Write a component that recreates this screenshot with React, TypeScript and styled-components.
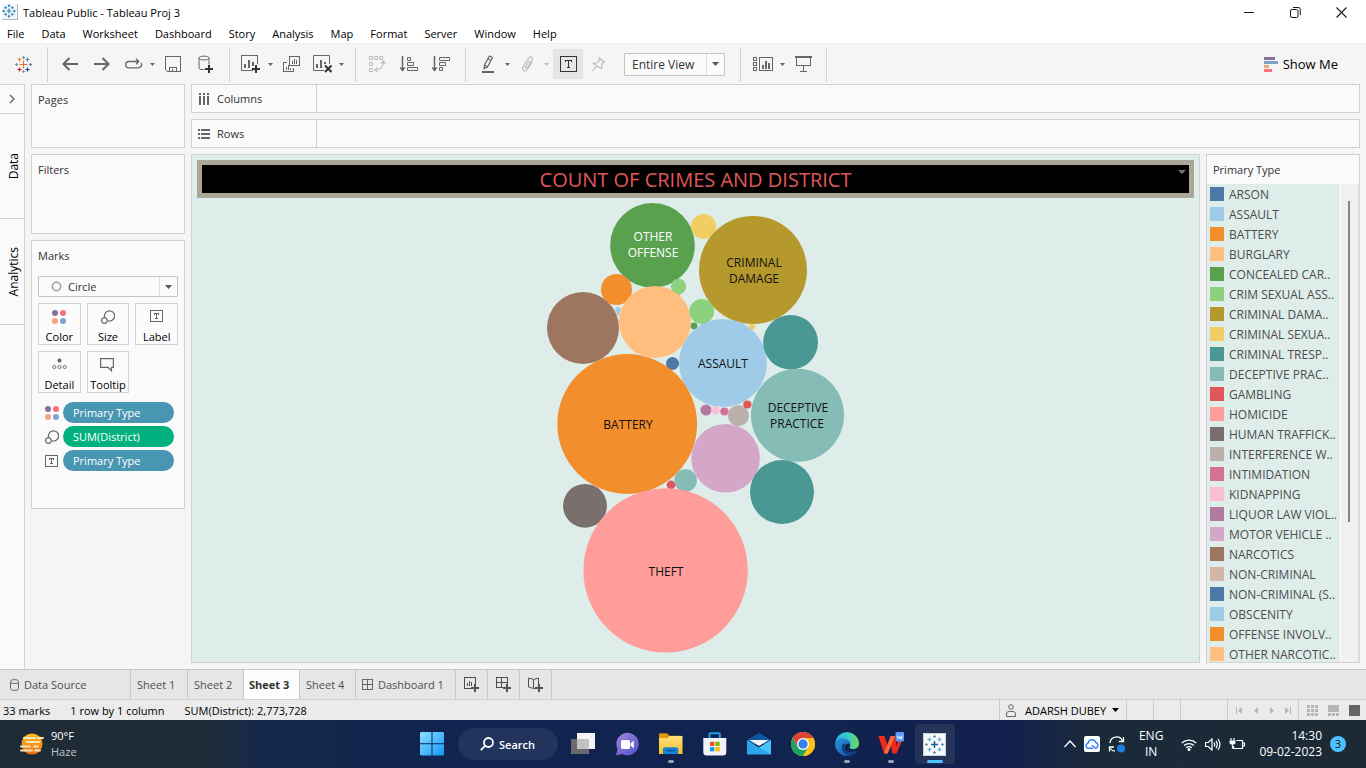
import React from 'react';
import styled, { createGlobalStyle } from 'styled-components';

const GlobalStyle = createGlobalStyle`
  * { box-sizing: border-box; }
  body { margin: 0; background: #f5f5f5; }
  body, button, select {
    font-family: "Open Sans", "Noto Sans", sans-serif;
    font-size: 11px;
    color: #1a1a1a;
  }
  button { border: 0; padding: 0; background: none; cursor: pointer; }
  svg { display: block; flex: none; }
  h1, h2, ul { margin: 0; padding: 0; }
`;

const line = '#d2d2d2';

const Window = styled.div`
  display: flex;
  flex-direction: column;
  height: 100vh;
  overflow: hidden;
`;

/* ---------- title and menu ---------- */

const TitleBar = styled.header`
  display: flex;
  align-items: center;
  height: 24px;
  background: #fff;
  color: #000;
  padding-left: 2px;
`;

const AppIcon = styled.span`
  padding: 0 1px 1px 0;
  border-right: 1px solid #b5b5b5;
  border-bottom: 1px solid #b5b5b5;
  background: #f2f6f9;
`;

const WindowTitle = styled.span`
  margin-left: 5px;
`;

const WindowButtons = styled.div`
  display: flex;
  margin-left: auto;
  margin-right: 2px;
`;

const WindowButton = styled.button`
  display: grid;
  place-items: center;
  width: 46px;
  height: 20px;
`;

const MenuBar = styled.nav`
  display: flex;
  align-items: center;
  gap: 1px;
  height: 19px;
  background: #fff;
`;

const MenuItem = styled.button`
  padding: 0 9px 0 7px;
  line-height: 19px;
  color: #000;
`;

/* ---------- toolbar ---------- */

const ToolbarRow = styled.div`
  display: flex;
  align-items: center;
  height: 41px;
  border-top: 1px solid #ececec;
  background: #f5f5f5;
`;

const ToolGroup = styled.div<{ $left?: number; $right?: number }>`
  display: flex;
  align-items: center;
  height: 35px;
  padding-left: ${(p) => p.$left ?? 6}px;
  padding-right: ${(p) => p.$right ?? 8}px;
  border-right: 1px solid ${line};
`;

const ToolButton = styled.button<{ $narrow?: boolean; $active?: boolean }>`
  display: grid;
  place-items: center;
  width: ${(p) => (p.$narrow ? 30 : 32)}px;
  height: 30px;
  color: #666;
  background: ${(p) => (p.$active ? '#e5e5e5' : 'transparent')};
  margin-left: ${(p) => (p.$active ? 2 : 0)}px;
  &:disabled { color: #bdbdbd; }
`;

const CaretButton = styled.button`
  display: grid;
  place-items: center;
  width: 9px;
  height: 30px;
  color: #666;
  &:disabled { color: #bdbdbd; }
`;

const SelectFrame = styled.div<{ $wide?: boolean }>`
  display: grid;
  grid-template-columns: 1fr 18px;
  height: ${(p) => (p.$wide ? 21 : 23)}px;
  width: ${(p) => (p.$wide ? 'auto' : '101px')};
  margin: ${(p) => (p.$wide ? '5px 0 0' : '0 0 0 11px')};
  border: 1px solid #c4c4c4;
  border-radius: 1px;
  background: #fbfbfb;
`;

const SelectInput = styled.select<{ $inset: number; $size: number }>`
  grid-area: 1 / 1 / 2 / 3;
  appearance: none;
  min-width: 0;
  border: 0;
  padding: 0 18px 0 ${(p) => p.$inset}px;
  font-size: ${(p) => p.$size}px;
  color: #333;
  background: transparent;
`;

const SelectArrow = styled.span`
  grid-area: 1 / 2 / 2 / 3;
  display: grid;
  place-items: center;
  border-left: 1px solid #dcdcdc;
  color: #555;
  pointer-events: none;
`;

const SelectMark = styled.span`
  grid-area: 1 / 1 / 2 / 2;
  display: flex;
  align-items: center;
  padding-left: 12px;
  pointer-events: none;
`;

const ShowMe = styled.button`
  display: flex;
  align-items: center;
  gap: 5px;
  margin-left: auto;
  margin-right: 28px;
  font-size: 13px;
  color: #000;
`;

/* ---------- workspace ---------- */

const Workspace = styled.main`
  display: flex;
  flex: 1;
  min-height: 0;
  padding-right: 6px;
  background: #f5f5f5;
`;

const SideTabs = styled.div`
  display: flex;
  flex-direction: column;
  width: 25px;
  border-top: 1px solid ${line};
  border-right: 1px solid ${line};
  background: #fafafa;
`;

const Expander = styled.button`
  display: grid;
  place-items: center;
  height: 29px;
  border-bottom: 1px solid ${line};
`;

const SideTab = styled.button<{ $tall?: boolean }>`
  display: grid;
  place-items: center;
  height: ${(p) => (p.$tall ? 106 : 105)}px;
  padding-left: 2px;
  border-bottom: 1px solid ${line};
  color: #000;
  font-size: 12px;
  span {
    writing-mode: vertical-rl;
    transform: rotate(180deg);
  }
`;

const Cards = styled.aside`
  display: flex;
  flex-direction: column;
  gap: 6px;
  width: 154px;
  margin: 0 6px;
`;

const Card = styled.section<{ $h: number }>`
  height: ${(p) => p.$h}px;
  padding: 0 6px;
  border: 1px solid ${line};
  background: #fafafa;
`;

const CardTitle = styled.h2`
  font-size: 11px;
  font-weight: 400;
  line-height: 30px;
  color: #333;
`;

const MarkGrid = styled.div`
  display: grid;
  grid-template-columns: repeat(3, 1fr);
  gap: 6px;
  margin: 6px 0 9px;
`;

const MarkButton = styled.button`
  display: flex;
  flex-direction: column;
  align-items: center;
  justify-content: space-between;
  height: 42px;
  padding-top: 6px;
  border: 1px solid ${line};
  background: #fbfbfb;
  color: #000;
  line-height: 15px;
`;

const PillRow = styled.div`
  display: grid;
  grid-template-columns: 14px 1fr;
  align-items: center;
  gap: 4px;
  margin: 0 4px 3px 7px;
`;

const Pill = styled.button<{ $green?: boolean }>`
  height: 21px;
  padding-left: 10px;
  border-radius: 11px;
  background: ${(p) => (p.$green ? '#00b180' : '#4996b2')};
  color: #fff;
  text-align: left;
`;

const Center = styled.div`
  display: flex;
  flex: 1;
  flex-direction: column;
  gap: 6px;
  min-width: 0;
  padding-bottom: 6px;
`;

const Shelf = styled.div`
  display: flex;
  height: 29px;
  border: 1px solid ${line};
  background: #fafafa;
`;

const ShelfLabel = styled.div`
  display: flex;
  align-items: center;
  gap: 7px;
  width: 125px;
  padding-left: 6px;
  border-right: 1px solid ${line};
  color: #333;
`;

const ViewRow = styled.div`
  display: flex;
  flex: 1;
  gap: 6px;
  min-height: 0;
`;

const Sheet = styled.section`
  display: flex;
  flex: 1;
  flex-direction: column;
  min-width: 0;
  padding: 5px;
  border: 1px solid ${line};
  background: #dfedea;
`;

const SheetTitle = styled.h1`
  position: relative;
  height: 38px;
  border: 5px solid #aaa698;
  background: #000;
  color: #e15759;
  font-size: 20px;
  font-weight: 500;
  line-height: 30px;
  text-align: center;
`;

const TitleMenu = styled.span`
  position: absolute;
  top: 5px;
  right: 3px;
  color: #777;
`;

const Chart = styled.div`
  display: flex;
  flex: 1;
  justify-content: center;
  align-items: flex-start;
  min-height: 0;
`;

const ChartLabel = styled.text`
  font-family: "Open Sans", sans-serif;
  font-size: 12px;
  text-anchor: middle;
`;

const Legend = styled.section`
  display: flex;
  flex-direction: column;
  width: 154px;
  border: 1px solid ${line};
  background: #fafafa;
`;

const LegendTitle = styled.h2`
  padding-left: 6px;
  font-size: 11px;
  font-weight: 400;
  line-height: 29px;
  color: #333;
`;

const LegendBody = styled.div`
  display: flex;
  flex: 1;
  min-height: 0;
  padding-right: 2px;
  background: #dfedea;
`;

const LegendList = styled.ul`
  flex: 1;
  overflow: hidden;
  list-style: none;
  border-right: 1px solid #fff;
`;

const LegendItem = styled.li`
  display: flex;
  align-items: center;
  gap: 5px;
  height: 20px;
  padding-left: 3px;
  font-size: 12px;
  color: #4c4c4c;
  white-space: nowrap;
`;

const Swatch = styled.span<{ $color: string }>`
  width: 14px;
  height: 14px;
  background: ${(p) => p.$color};
`;

const ScrollTrack = styled.div`
  width: 16px;
  padding: 17px 0 0 7px;
  background: #f0f0f0;
`;

const ScrollThumb = styled.div`
  width: 2px;
  height: 321px;
  background: #858585;
`;

/* ---------- sheet tabs and status ---------- */

const TabStrip = styled.nav`
  display: flex;
  height: 31px;
  border-top: 1px solid #c8c8c8;
  border-bottom: 1px solid #cfcfcf;
  background: #e6e6e6;
`;

const SheetTab = styled.button<{ $w: number; $on?: boolean }>`
  display: flex;
  align-items: center;
  gap: 5px;
  width: ${(p) => p.$w}px;
  padding-left: ${(p) => (p.$on ? 5 : 6)}px;
  border-right: 1px solid #c8c8c8;
  background: ${(p) => (p.$on ? '#fdfdfd' : 'transparent')};
  color: ${(p) => (p.$on ? '#333' : '#4f4f4f')};
  font-weight: ${(p) => (p.$on ? 700 : 400)};
  white-space: nowrap;
`;

const SourceTab = styled(SheetTab)`
  padding-left: 10px;
`;

const AddTab = styled(SheetTab)`
  justify-content: center;
  padding: 0;
`;

const StatusBar = styled.footer`
  display: flex;
  align-items: center;
  height: 20px;
  padding-left: 3px;
  background: #ebebeb;
  color: #000;
  white-space: nowrap;
`;

const StatusText = styled.span`
  margin-right: 20px;
`;

const StatusCell = styled.div<{ $w: number; $gap?: number }>`
  display: flex;
  align-items: center;
  gap: ${(p) => p.$gap ?? 0}px;
  width: ${(p) => p.$w}px;
  height: 20px;
  padding-left: ${(p) => (p.$gap ? 8 : 6)}px;
  border-left: 1px solid #cbcbcb;
`;

const StatusRight = styled.div`
  display: flex;
  margin-left: auto;
`;

const UserButton = styled.button`
  display: flex;
  align-items: center;
  gap: 9px;
  color: #000;
`;

const UserName = styled.span`
  display: flex;
  align-items: center;
  gap: 6px;
`;

const SmallButton = styled.button`
  display: grid;
  place-items: center;
  min-width: 7px;
  height: 16px;
  color: #b5b5b5;
`;

/* ---------- taskbar ---------- */

const Taskbar = styled.footer`
  display: grid;
  grid-template-columns: 1fr auto 1fr;
  align-items: center;
  height: 48px;
  background: linear-gradient(90deg, #1f2b35 0%, #1f2b37 15%, #15294a 19%, #10244f 32%, #11234f 60%, #101f4f 73%, #1b2a3a 80%, #1c2a35 100%);
  color: #fff;
`;

const Weather = styled.button`
  display: flex;
  align-items: center;
  gap: 7px;
  margin-left: 20px;
  color: #fff;
  text-align: left;
  line-height: 16px;
  span { display: block; }
  span + span { color: #c3c9ce; }
`;

const Dock = styled.div`
  display: flex;
  align-items: center;
`;

const SearchButton = styled.button`
  display: flex;
  align-items: center;
  justify-content: center;
  gap: 5px;
  width: 100px;
  height: 32px;
  margin: 0 3px 0 4px;
  border-radius: 16px;
  background: #22335c;
  color: #fff;
  font-weight: 600;
`;

const DockButton = styled.button<{ $on?: boolean }>`
  position: relative;
  display: grid;
  place-items: center;
  width: ${(p) => (p.$on ? 40 : 44)}px;
  height: 40px;
  margin: 0 ${(p) => (p.$on ? 2 : 0)}px;
  border-radius: 4px;
  background: ${(p) => (p.$on ? '#243459' : 'transparent')};
`;

const Indicator = styled.span<{ $on?: boolean }>`
  position: absolute;
  bottom: 1px;
  left: 50%;
  width: ${(p) => (p.$on ? 16 : 6)}px;
  height: 3px;
  margin-left: ${(p) => (p.$on ? -8 : -3)}px;
  border-radius: 2px;
  background: ${(p) => (p.$on ? '#4cc2ff' : '#9aa1b5')};
`;

const Tray = styled.div`
  display: flex;
  align-items: center;
  justify-content: flex-end;
  gap: 8px;
  padding-right: 20px;
`;

const TrayButton = styled.button`
  color: #fff;
`;

const TrayText = styled.button<{ $end?: boolean }>`
  margin: ${(p) => (p.$end ? '0 0 0 6px' : '0 10px 0 5px')};
  color: #fff;
  font-size: 12px;
  line-height: 16px;
  text-align: ${(p) => (p.$end ? 'right' : 'center')};
  span { display: block; }
`;

const Badge = styled.span`
  width: 16px;
  height: 16px;
  border-radius: 50%;
  background: #4cc2ff;
  color: #0b1a2c;
  line-height: 16px;
  text-align: center;
`;

/* ---------- data ---------- */

const bubbles: [number, number, number, string][] = [
  [652.5, 245.3, 42.3, '#59a14f'],
  [703.5, 226.5, 12.5, '#f1ce63'],
  [753, 270, 54, '#b6992d'],
  [616.5, 289.5, 15.5, '#f28e2b'],
  [678.5, 286.5, 7.7, '#8cd17d'],
  [679.4, 295, 0.8, '#b6992d'],
  [583, 328, 36, '#9d7660'],
  [655, 322, 36, '#ffbe7d'],
  [618, 310, 2.9, '#a0cbe8'],
  [618, 314, 1.6, '#d7b5a6'],
  [701.7, 311.5, 12.4, '#8cd17d'],
  [694, 326, 3.4, '#59a14f'],
  [723, 363, 44, '#a0cbe8'],
  [752, 326.8, 3, '#f1ce63'],
  [790.6, 342.3, 27.4, '#499894'],
  [672.5, 363.5, 6.5, '#4e79a7'],
  [627.2, 424, 69.9, '#f28e2b'],
  [797.5, 415.2, 46.5, '#86bcb6'],
  [706, 410, 5.6, '#b07aa1'],
  [715.6, 410.4, 4.2, '#fabfd2'],
  [724.4, 411.5, 4.1, '#d37295'],
  [738.4, 415.5, 10.5, '#bab0ac'],
  [747.4, 404.5, 4.1, '#e15759'],
  [725.6, 458.3, 34.3, '#d4a6c8'],
  [782, 492, 32, '#499894'],
  [585, 505.8, 21.9, '#79706e'],
  [685.6, 480.5, 11.3, '#86bcb6'],
  [671, 485, 4.4, '#e15759'],
  [665.6, 570.4, 82.2, '#ff9d9a'],
];

const chartLabels: [number, number, string, string][] = [
  [653, 241, 'OTHER', '#fff'],
  [653, 257, 'OFFENSE', '#fff'],
  [754, 267, 'CRIMINAL', '#111'],
  [754, 283, 'DAMAGE', '#111'],
  [723, 368, 'ASSAULT', '#111'],
  [628, 429, 'BATTERY', '#111'],
  [798, 412, 'DECEPTIVE', '#111'],
  [797, 428, 'PRACTICE', '#111'],
  [666, 576, 'THEFT', '#111'],
];

const legend: [string, string][] = [
  ['ARSON', '#4e79a7'],
  ['ASSAULT', '#a0cbe8'],
  ['BATTERY', '#f28e2b'],
  ['BURGLARY', '#ffbe7d'],
  ['CONCEALED CAR..', '#59a14f'],
  ['CRIM SEXUAL ASS..', '#8cd17d'],
  ['CRIMINAL DAMA..', '#b6992d'],
  ['CRIMINAL SEXUA..', '#f1ce63'],
  ['CRIMINAL TRESP..', '#499894'],
  ['DECEPTIVE PRAC..', '#86bcb6'],
  ['GAMBLING', '#e15759'],
  ['HOMICIDE', '#ff9d9a'],
  ['HUMAN TRAFFICK..', '#79706e'],
  ['INTERFERENCE W..', '#bab0ac'],
  ['INTIMIDATION', '#d37295'],
  ['KIDNAPPING', '#fabfd2'],
  ['LIQUOR LAW VIOL..', '#b07aa1'],
  ['MOTOR VEHICLE ..', '#d4a6c8'],
  ['NARCOTICS', '#9d7660'],
  ['NON-CRIMINAL', '#d7b5a6'],
  ['NON-CRIMINAL (S..', '#4e79a7'],
  ['OBSCENITY', '#a0cbe8'],
  ['OFFENSE INVOLV..', '#f28e2b'],
  ['OTHER NARCOTIC..', '#ffbe7d'],
];

const menus = ['File', 'Data', 'Worksheet', 'Dashboard', 'Story', 'Analysis', 'Map', 'Format', 'Server', 'Window', 'Help'];

/* ---------- icons ---------- */

type SvgProps = { w: number; h?: number; sw?: number; crisp?: boolean; children: React.ReactNode };
const Svg = ({ w, h = w, sw = 1, crisp, children }: SvgProps) => (
  <svg width={w} height={h} viewBox={`0 0 ${w} ${h}`} fill="none" stroke="currentColor" strokeWidth={sw}
    shapeRendering={crisp ? 'crispEdges' : undefined} aria-hidden="true">{children}</svg>
);

const Caret = ({ w = 5, h = 3 }: { w?: number; h?: number }) => (
  <svg width={w} height={h} viewBox={`0 0 ${w} ${h}`} fill="currentColor" aria-hidden="true"><path d={`M0 0H${w}L${w / 2} ${h}Z`} /></svg>
);

const brandPluses: [number, number, number, string][] = [
  [8.5, 8.5, 4, '#e8762c'],
  [8.5, 1.5, 1.5, '#7099a6'], [8.5, 15.5, 1.5, '#8d93bb'],
  [1.5, 8.5, 1.5, '#7099a6'], [15.5, 8.5, 1.5, '#6b7fae'],
  [4.5, 3.5, 2, '#eb912c'], [12.5, 3.5, 2, '#59879b'],
  [4.5, 13.5, 2, '#c72035'], [12.5, 13.5, 2, '#1f457e'],
];

const BrandMark = () => (
  <svg width="17" height="17" viewBox="0 0 17 17" fill="none" strokeWidth="1.2" aria-hidden="true">
    {brandPluses.map(([x, y, r, c]) => (
      <path key={`${x}-${y}`} stroke={c} d={`M${x - r} ${y}H${x + r}M${x} ${y - r}V${y + r}`} />
    ))}
  </svg>
);

const AppMark = () => (
  <svg width="14" height="14" viewBox="0 0 14 14" fill="none" stroke="#2f7fb5" strokeWidth="1.2" aria-hidden="true">
    <path d="M7 4.5V9.5M4.5 7H9.500M7 .5V3M5.800 1.700H8.200M7 11V13.500M5.800 12.300H8.200M1.700 5.800V8.200M.5 7H3M12.300 5.800V8.200M11 7H13.500" />
    <path d="M3.600 2.400V4.800M2.400 3.600H4.800M10.400 2.400V4.800M9.200 3.600H11.600M3.600 9.200V11.600M2.400 10.400H4.800M10.400 9.200V11.600M9.200 10.400H11.600" />
  </svg>
);

const FourDots = () => (
  <svg width="14" height="14" viewBox="0 0 14 14" aria-hidden="true">
    <circle cx="3" cy="3" r="3" fill="#8a6f9b" /><circle cx="11" cy="3" r="3" fill="#f9707f" />
    <circle cx="3" cy="11" r="3" fill="#f4a67a" /><circle cx="11" cy="11" r="3" fill="#7fa4cc" />
  </svg>
);
const SizeIcon = () => (
  <Svg w={14}><g stroke="#666" strokeWidth="1.2"><path d="M3.6 7.3A5.1 5.1 0 1 1 6.800 10.700" /><circle cx="3.4" cy="10.5" r="2.8" /></g></Svg>
);
const TextIcon = () => (
  <Svg w={13} h={12} crisp><g stroke="#666"><path d="M.5 .5H12.5V11.5H.5Z" /><path d="M4 3.5H9M6.5 3V8.5M5 8.5H8M4.5 4V5M8.5 4V5" /></g></Svg>
);
const DetailIcon = () => (
  <Svg w={15} h={12}><circle cx="7.5" cy="2.5" r="2" fill="#666" stroke="none" /><g stroke="#777"><circle cx="2.3" cy="9" r="1.6" /><circle cx="7.5" cy="9" r="1.6" /><circle cx="12.7" cy="9" r="1.6" /></g></Svg>
);
const TooltipIcon = () => (
  <Svg w={15} h={14}><path stroke="#666" strokeWidth="1.2" d="M.6 .6H13.4V9.4H11.5V12.8L8 9.4H.6Z" /></Svg>
);

const WinLogo = () => (
  <svg width="24" height="24" viewBox="0 0 24 24" aria-hidden="true">
    <defs><linearGradient id="win" x1="0" y1="0" x2="1" y2="1"><stop stopColor="#8fe0ff" /><stop offset="1" stopColor="#0f95fb" /></linearGradient></defs>
    <path fill="url(#win)" d="M1 0H11.5V11.2H0V1ZM12.5 0H23L24 1V11.2H12.5ZM0 12.2H11.5V23.5H1L0 22.5ZM12.5 12.2H24V22.5L23 23.5H12.5Z" />
  </svg>
);

const dock: { name: string; on?: boolean; running?: boolean; art: React.ReactNode }[] = [
  {
    name: 'Task view', art: (
      <svg width="24" height="24" viewBox="0 0 24 24"><path d="M0 7H18V22H0Z" fill="#6a6a6a" /><path d="M6 1H24V17H6Z" fill="#f4f4f4" /><path d="M6 7H18V17H6Z" fill="#c2c2c2" /></svg>),
  },
  {
    name: 'Chat', art: (
      <svg width="24" height="24" viewBox="0 0 24 24">
        <defs><linearGradient id="chat" x1="0" y1="0" x2="1" y2="1"><stop stopColor="#a583cf" /><stop offset="1" stopColor="#4f54d4" /></linearGradient></defs>
        <path d="M12.5 .8A11.2 11.2 0 1 1 7.5 22L1 23.4L2.5 17A11.2 11.2 0 0 1 12.5 .8Z" fill="url(#chat)" />
        <rect x="6" y="8" width="9" height="9" rx="1.5" fill="#fff" /><path d="M15.5 11.5L18.8 8.5V16.5L15.5 13.5Z" fill="#fff" />
      </svg>),
  },
  {
    name: 'File Explorer', running: true, art: (
      <svg width="24" height="24" viewBox="0 0 24 24">
        <defs><linearGradient id="fold" x1="0" y1="0" x2="0" y2="1"><stop stopColor="#ffdf7a" /><stop offset="1" stopColor="#fbbe28" /></linearGradient></defs>
        <path d="M0 2.2Q0 1.2 1 1.2H8L10.5 3.7H22V8H0Z" fill="#dd9a05" /><path d="M0 6H8.5L10.5 4H23.5V22H0Z" fill="url(#fold)" />
        <path d="M4 22V17Q4 15.3 5.7 15.3H17.6Q19.3 15.3 19.3 17V22Z" fill="#1583d8" /><path d="M7.5 18.6H16" stroke="#0b4f94" strokeWidth="1.4" />
      </svg>),
  },
  {
    name: 'Store', art: (
      <svg width="24" height="24" viewBox="0 0 24 24">
        <path d="M6.5 7V2.2Q6.5 1.2 7.5 1.2H15.8Q16.8 1.2 16.8 2.2V7" fill="none" stroke="#1ea0e8" strokeWidth="2" />
        <path d="M.3 6H23.3V20Q23.3 23.5 20 23.5H3.6Q.3 23.5 .3 20Z" fill="#f1f3f6" />
        <path d="M7 9.8H11.3V14H7Z" fill="#f2511b" /><path d="M12.4 9.8H16.7V14H12.4Z" fill="#7eb900" /><path d="M7 15.1H11.3V19.3H7Z" fill="#00a3ee" /><path d="M12.4 15.1H16.7V19.3H12.4Z" fill="#feb800" />
      </svg>),
  },
  {
    name: 'Mail', art: (
      <svg width="24" height="24" viewBox="0 0 24 24">
        <path d="M0 8L12 .8L24 8V12H0Z" fill="#0e56a0" />
        <path d="M0 8L12 15.5L24 8V22.6H0Z" fill="#2da5e8" /><path d="M24 8L12 15.5L24 22.6Z" fill="#49c3f7" /><path d="M2.2 8H21.8L12 14Z" fill="#f3f3f3" />
      </svg>),
  },
  {
    name: 'Chrome', art: (
      <svg width="24" height="24" viewBox="0 0 24 24">
        <circle cx="12" cy="12" r="12" fill="#fbc116" />
        <path d="M12 6H22.4A12 12 0 0 0 1.6 6L6.8 15Z" fill="#db4437" />
        <path d="M1.6 6A12 12 0 0 0 12 24L17.2 15L6.8 15Z" fill="#1ea362" /><path d="M22.4 6A12 12 0 0 1 12 24L17.2 15L12 6Z" fill="#fbc116" />
        <circle cx="12" cy="12" r="6" fill="#fff" /><circle cx="12" cy="12" r="4.7" fill="#3480ee" />
      </svg>),
  },
  {
    name: 'Edge', running: true, art: (
      <svg width="24" height="24" viewBox="0 0 24 24">
        <defs>
          <linearGradient id="edgeTop" x1="0" y1="0" x2="1" y2="0"><stop stopColor="#2ba9e4" /><stop offset=".5" stopColor="#36c9cf" /><stop offset="1" stopColor="#6ddb5b" /></linearGradient>
          <linearGradient id="edgeLow" x1="0" y1="0" x2="1" y2="1"><stop stopColor="#2a96e4" /><stop offset="1" stopColor="#0c4f9f" /></linearGradient>
        </defs>
        <path d="M.3 10.5A11.9 11.9 0 0 1 24 11.8C24 15.5 21 17 18.3 17C15.5 17 14 16 14.6 15C16.3 12.5 14 9 10 9C5 9 1 9.5 .3 10.5Z" fill="url(#edgeTop)" />
        <path d="M.1 11.5C1 7.5 4.5 6.3 8 6.5C12.8 6.7 15.8 9.5 15.4 12.3C14 10.8 9.5 11.5 9.5 15.3C9.5 20.5 16.5 21.2 21.7 18.4C21 20.8 17 24 12 24A12 12 0 0 1 .1 11.5Z" fill="url(#edgeLow)" />
        <path d="M8 11.7C5.5 14.5 6.8 21.5 13.6 23.8C18 23.6 21 20.8 21.9 18.6C16.5 21.2 9.5 20.5 9.5 15.3C9.5 13.8 10 12.5 11 11.7Z" fill="#123f7f" />
      </svg>),
  },
  {
    name: 'WPS Office', running: true, art: (
      <svg width="26" height="24" viewBox="0 0 26 24">
        <path d="M.5 4H6.5L10 15L12.7 4H17L18.5 14L20 9H24L18.5 21.5H14.5L13.2 14L9.5 21.5H6Z" fill="#ee2a1d" />
        <path d="M6 21.5L10.5 9.5L12.7 4H17L9.5 21.5Z" fill="#ff6a3a" />
        <rect x="17.5" y="0" width="8.5" height="9.5" rx="1" fill="#5b9bff" /><path d="M19.3 3.5L20.5 7L21.8 4.5L23 7L24.3 3.5" stroke="#fff" fill="none" />
      </svg>),
  },
  {
    name: 'Tableau Public', running: true, on: true, art: (
      <svg width="23" height="23" viewBox="0 0 23 23">
        <path d="M0 0H23V23H0Z" fill="#f6f8fa" /><path d="M.5 .5H22.5V22.5H.5Z" fill="none" stroke="#c9d0d8" />
        <g fill="none">
          <path d="M11.5 8V15M8 11.5H15" stroke="#1f5c93" strokeWidth="1.5" />
          <path d="M11.5 2V5M10 3.5H13M11.5 18V21M10 19.5H13M3.5 10V13M2 11.5H5M19.5 10V13M18 11.5H21" stroke="#5f8fb4" />
          <path d="M6.5 4.5V8.5M4.5 6.5H8.5M16.5 4.5V8.5M14.5 6.5H18.5M6.5 14.5V18.5M4.5 16.5H8.5M16.5 14.5V18.5M14.5 16.5H18.5" stroke="#79b3d3" strokeWidth="1.4" />
        </g>
      </svg>),
  },
];

const Plus = ({ x, y, r = 4, color = '#333' }: { x: number; y: number; r?: number; color?: string }) => (
  <path stroke={color} strokeWidth="2" d={`M${x - r} ${y}H${x + r}M${x} ${y - r}V${y + r}`} />
);

/* ---------- sections ---------- */

const Toolbar = () => (
  <ToolbarRow role="toolbar" aria-label="Tools">
    <ToolGroup $left={7}>
      <ToolButton aria-label="Start page"><BrandMark /></ToolButton>
    </ToolGroup>
    <ToolGroup>
      <ToolButton aria-label="Undo"><Svg w={16} h={14} sw={2}><path d="M16 7H1.5M7.5 1L1.5 7L7.5 13" /></Svg></ToolButton>
      <ToolButton aria-label="Redo"><Svg w={16} h={14} sw={2}><path d="M0 7H14.5M8.5 1L14.5 7L8.5 13" /></Svg></ToolButton>
      <ToolButton $narrow aria-label="Replay"><Svg w={19} h={12} sw={1.3}><path d="M14 3.5H4.3A3.2 3.2 0 0 0 4.3 9.8H14A3.3 3.3 0 0 0 17.3 5M12 .8L14.7 3.5L12 6.2" /></Svg></ToolButton>
      <CaretButton aria-label="Replay options"><Caret /></CaretButton>
      <ToolButton aria-label="Save"><Svg w={16} crisp><path d="M.5 .5H15.5V15.5H2.5L.5 13.5ZM4.5 15V11.5H11.5V15M7.5 13V15" /></Svg></ToolButton>
      <ToolButton aria-label="New data source"><Svg w={15} h={18}><path d="M6.5 14.5H3A2 2 0 0 1 1 12.5V3C1 .5 11 .5 11 3V9.5M1 3.2C1 5.5 11 5.5 11 3.2" /><Plus x={11} y={14} /></Svg></ToolButton>
    </ToolGroup>
    <ToolGroup $left={4} $right={9}>
      <ToolButton aria-label="New worksheet"><Svg w={19} h={18} crisp><path d="M12 15.5H.5V.5H16.5V9" /><path strokeWidth="2" d="M4 13V9M8 13V5M12 11V7" /><Plus x={15} y={14} /></Svg></ToolButton>
      <CaretButton aria-label="New worksheet options"><Caret /></CaretButton>
      <ToolButton aria-label="Duplicate"><Svg w={17} h={16} crisp><path d="M6.5 .5H16.5V9.5H6.5ZM4 6.5H.5V15.5H10.5V12" /><path d="M9.5 8V5M11.5 8V3M13.5 8V4M3.5 14V11M5.5 14V9M7.5 14V12" /></Svg></ToolButton>
      <ToolButton $narrow aria-label="Clear sheet"><Svg w={19} h={18}><path d="M11 15.5H.5V.5H16.5V9" /><path strokeWidth="2" d="M4 13V9M8 13V5M12 9V7" /><path stroke="#333" strokeWidth="2" d="M12 10.5L18.5 17M18.5 10.5L12 17" /></Svg></ToolButton>
      <CaretButton aria-label="Clear options"><Caret /></CaretButton>
    </ToolGroup>
    <ToolGroup $left={5}>
      <ToolButton disabled aria-label="Swap rows and columns"><Svg w={17} h={16}><path d="M.5 .5H3.5V3.5H.5ZM5.5 .5H8.5V3.5H5.5ZM10.5 .5H13.5V3.5H10.5ZM.5 6.5H3.5V9.5H.5ZM.5 12.5H3.5V15.5H.5Z" /><path strokeWidth="1.2" d="M6 14C11 14 14.5 11 14.5 5.5M12.3 7.5L14.5 5L16.7 7.5M8.5 11.5L6 14L8.5 16" /></Svg></ToolButton>
      <ToolButton aria-label="Sort ascending"><Svg w={18} h={16}><path strokeWidth="1.5" d="M2.5 0V14M.3 11.5L2.5 14.5L4.7 11.5" /><path d="M7.5 1.5H10.5V4.5H7.5ZM7.5 6.5H13.5V9.5H7.5ZM7.5 11.5H17.5V14.5H7.5Z" /></Svg></ToolButton>
      <ToolButton aria-label="Sort descending"><Svg w={18} h={16}><path strokeWidth="1.5" d="M2.5 0V14M.3 11.5L2.5 14.5L4.7 11.5" /><path d="M7.5 1.5H17.5V4.5H7.5ZM7.5 6.5H13.5V9.5H7.5ZM7.5 11.5H10.5V14.5H7.5Z" /></Svg></ToolButton>
    </ToolGroup>
    <ToolGroup $left={7} $right={15}>
      <ToolButton $narrow aria-label="Highlight"><Svg w={13} h={18}><path strokeWidth="1.2" d="M7.5 1L10.5 2.5L5.5 12L2 13.5L2.5 10ZM6 4L9 5.5M2.5 10L5.5 11.8" /><path strokeWidth="2" d="M0 17H12" /></Svg></ToolButton>
      <CaretButton aria-label="Highlight options"><Caret /></CaretButton>
      <ToolButton $narrow disabled aria-label="Group members"><Svg w={13} h={16}><path strokeWidth="1.2" d="M8.5 4.5L4.7 10.5C4 12 5.7 12.7 6.5 11.5L10.8 4.5C12.5 1.5 9.5 -.5 7.7 2L2 11C.5 14 4 16.5 6.3 13.5L11.5 5.5" /></Svg></ToolButton>
      <CaretButton disabled aria-label="Group options"><Caret /></CaretButton>
      <ToolButton $active $narrow aria-label="Show mark labels"><Svg w={17} h={16} crisp><g stroke="#333"><path d="M.5 .5H16.5V15.5H.5Z" /><path d="M5 4.5H12M8.5 4V11.5M7 11.5H10M5.5 4V6M11.5 4V6" /></g></Svg></ToolButton>
      <ToolButton disabled $narrow aria-label="Fix axes"><Svg w={13} h={15}><path strokeWidth="1.2" d="M7 1L12.5 5L11 5.5L9.5 8.5L9.8 11.5L5.5 9.5L1.5 6.5L5.5 5.5L7.5 3ZM4.5 9L.5 14" /></Svg></ToolButton>
      <SelectFrame>
        <SelectInput aria-label="Fit" $inset={7} $size={12}><option>Entire View</option></SelectInput>
        <SelectArrow><Caret w={7} h={4} /></SelectArrow>
      </SelectFrame>
    </ToolGroup>
    <ToolGroup $left={7} $right={7}>
      <ToolButton $narrow aria-label="Show or hide cards"><Svg w={20} h={14} crisp><path d="M.5 .5H3.5V3.5H.5ZM.5 5.5H3.5V8.5H.5ZM.5 10.5H3.5V13.5H.5ZM6.5 .5H19.5V13.5H6.5Z" /><path strokeWidth="2" d="M10 12V8M13 12V4M16 12V6" /></Svg></ToolButton>
      <CaretButton aria-label="Card options"><Caret /></CaretButton>
      <ToolButton aria-label="Presentation mode"><Svg w={17} h={16} crisp><path d="M0 1H17" strokeWidth="2" /><path d="M1.5 2V9.5H15.5V2M8.5 10V15M5 15.5H12" /></Svg></ToolButton>
    </ToolGroup>
    <ShowMe>
      <svg width="14" height="15" viewBox="0 0 14 15" aria-hidden="true"><path fill="#8a6f9b" d="M0 0H11V3H0Z" /><path fill="#7fa4cc" d="M0 4H14V7H0Z" /><path fill="#f4a67a" d="M0 8H5V11H0Z" /><path fill="#f9707f" d="M0 12H8V15H0Z" /></svg>
      Show Me
    </ShowMe>
  </ToolbarRow>
);

const MarksCard = () => (
  <Card $h={269}>
    <CardTitle>Marks</CardTitle>
    <SelectFrame $wide>
      <SelectMark><Svg w={11} sw={1.5}><circle cx="5.5" cy="5.5" r="4.2" stroke="#a0a0a0" /></Svg></SelectMark>
      <SelectInput aria-label="Mark type" $inset={29} $size={11}><option>Circle</option></SelectInput>
      <SelectArrow><Caret w={7} h={4} /></SelectArrow>
    </SelectFrame>
    <MarkGrid>
      <MarkButton><FourDots />Color</MarkButton>
      <MarkButton><SizeIcon />Size</MarkButton>
      <MarkButton><TextIcon />Label</MarkButton>
      <MarkButton><DetailIcon />Detail</MarkButton>
      <MarkButton><TooltipIcon />Tooltip</MarkButton>
    </MarkGrid>
    <PillRow><FourDots /><Pill>Primary Type</Pill></PillRow>
    <PillRow><SizeIcon /><Pill $green>SUM(District)</Pill></PillRow>
    <PillRow><TextIcon /><Pill>Primary Type</Pill></PillRow>
  </Card>
);

const BubbleChart = () => (
  <Chart>
    <svg width="301" height="456" viewBox="545 198 301 456" role="img" aria-label="Packed bubbles by primary type">
      {bubbles.map(([x, y, r, c]) => <circle key={`${x}-${y}`} cx={x} cy={y} r={r} fill={c} />)}
      {chartLabels.map(([x, y, t, c]) => <ChartLabel key={t} x={x} y={y} fill={c}>{t}</ChartLabel>)}
    </svg>
  </Chart>
);

export default function App() {
  return (
    <Window>
      <GlobalStyle />
      <TitleBar>
        <AppIcon><AppMark /></AppIcon>
        <WindowTitle>Tableau Public - Tableau Proj 3</WindowTitle>
        <WindowButtons>
          <WindowButton aria-label="Minimize"><Svg w={10} crisp><path d="M0 5.5H10" /></Svg></WindowButton>
          <WindowButton aria-label="Restore"><Svg w={11}><rect x=".5" y="2.5" width="7.5" height="8" rx="1.5" /><path d="M3 .5H8A2 2 0 0 1 10.3 2.5V8" /></Svg></WindowButton>
          <WindowButton aria-label="Close"><Svg w={11} sw={1.1}><path d="M.5 .5L10.5 10.5M10.5 .5L.5 10.5" /></Svg></WindowButton>
        </WindowButtons>
      </TitleBar>
      <MenuBar>{menus.map((m) => <MenuItem key={m}>{m}</MenuItem>)}</MenuBar>
      <Toolbar />

      <Workspace>
        <SideTabs>
          <Expander aria-label="Expand side bar"><Svg w={6} h={10} sw={1.5}><path stroke="#666" d="M1 1L5 5L1 9" /></Svg></Expander>
          <SideTab><span>Data</span></SideTab>
          <SideTab $tall><span>Analytics</span></SideTab>
        </SideTabs>
        <Cards>
          <Card $h={64}><CardTitle>Pages</CardTitle></Card>
          <Card $h={80}><CardTitle>Filters</CardTitle></Card>
          <MarksCard />
        </Cards>
        <Center>
          <Shelf>
            <ShelfLabel>
              <Svg w={12} sw={2} crisp><path stroke="#666" d="M2 0V2M2 3V12M6 0V2M6 3V12M10 0V2M10 3V12" /></Svg>Columns
            </ShelfLabel>
          </Shelf>
          <Shelf>
            <ShelfLabel>
              <Svg w={12} sw={2} crisp><path stroke="#666" d="M0 2H2M3 2H12M0 6H2M3 6H12M0 10H2M3 10H12" /></Svg>Rows
            </ShelfLabel>
          </Shelf>
          <ViewRow>
            <Sheet>
              <SheetTitle>COUNT OF CRIMES AND DISTRICT<TitleMenu><Caret w={8} h={4} /></TitleMenu></SheetTitle>
              <BubbleChart />
            </Sheet>
            <Legend>
              <LegendTitle>Primary Type</LegendTitle>
              <LegendBody>
                <LegendList>
                  {legend.map(([name, color]) => <LegendItem key={name}><Swatch $color={color} />{name}</LegendItem>)}
                </LegendList>
                <ScrollTrack><ScrollThumb /></ScrollTrack>
              </LegendBody>
            </Legend>
          </ViewRow>
        </Center>
      </Workspace>

      <TabStrip>
        <SourceTab $w={131}>
          <Svg w={9} h={12}><path stroke="#666" d="M.5 2.5C.5 0 8.5 0 8.5 2.5V9.5C8.5 12 .5 12 .5 9.5ZM.5 3C.5 5 8.5 5 8.5 3" /></Svg>Data Source
        </SourceTab>
        <SheetTab $w={57}>Sheet 1</SheetTab>
        <SheetTab $w={56}>Sheet 2</SheetTab>
        <SheetTab $w={56} $on>Sheet 3</SheetTab>
        <SheetTab $w={56}>Sheet 4</SheetTab>
        <SheetTab $w={100}>
          <Svg w={11} crisp><path stroke="#666" d="M.5 .5H10.5V10.5H.5ZM5.5 0V11M0 5.5H11" /></Svg>Dashboard 1
        </SheetTab>
        <AddTab $w={32} aria-label="New worksheet"><Svg w={15} crisp><path d="M8 11.5H.5V.5H11.5V8M3.5 9V6M5.5 9V4M7.5 9V5" /><Plus x={11} y={11} color="#555" /></Svg></AddTab>
        <AddTab $w={32} aria-label="New dashboard"><Svg w={15} crisp><path d="M8 10.5H.5V.5H11.5V8M5.5 0V11M0 5.5H12" /><Plus x={11} y={11} color="#555" /></Svg></AddTab>
        <AddTab $w={32} aria-label="New story"><Svg w={15}><path d="M7 12L5.5 11.5L.5 10V1L5.5 2.5L10.5 1V7M5.5 2.5V11.5" /><Plus x={11} y={11} color="#555" /></Svg></AddTab>
      </TabStrip>

      <StatusBar>
        <StatusText>33 marks</StatusText>
        <StatusText>1 row by 1 column</StatusText>
        <StatusText>SUM(District): 2,773,728</StatusText>
        <StatusRight>
          <StatusCell $w={127}>
            <UserButton>
              <Svg w={10} h={13}><circle cx="5" cy="3" r="2.3" stroke="#666" /><path stroke="#666" d="M.5 12.5V10Q.5 7.5 3 7.5H7Q9.5 7.5 9.5 10V12.5Z" /></Svg>
              <UserName>ADARSH DUBEY<Caret w={7} h={4} /></UserName>
            </UserButton>
          </StatusCell>
          <StatusCell $w={27} />
          <StatusCell $w={27} />
          <StatusCell $w={47} />
          <StatusCell $w={71} $gap={9}>
            <SmallButton aria-label="First sheet"><Svg w={7}><path d="M.5 0V7" /><path fill="currentColor" stroke="none" d="M6 0V7L2 3.5Z" /></Svg></SmallButton>
            <SmallButton aria-label="Previous sheet"><Svg w={4} h={7}><path fill="currentColor" stroke="none" d="M4 0V7L0 3.5Z" /></Svg></SmallButton>
            <SmallButton aria-label="Next sheet"><Svg w={4} h={7}><path fill="currentColor" stroke="none" d="M0 0V7L4 3.5Z" /></Svg></SmallButton>
            <SmallButton aria-label="Last sheet"><Svg w={7}><path d="M6.5 0V7" /><path fill="currentColor" stroke="none" d="M1 0V7L5 3.5Z" /></Svg></SmallButton>
          </StatusCell>
          <StatusCell $w={68} $gap={10}>
            <SmallButton aria-label="Sheet sorter"><Svg w={11} sw={3} crisp><path strokeDasharray="3 1" d="M0 1.5H11M0 5.5H11M0 9.5H11" /></Svg></SmallButton>
            <SmallButton aria-label="Filmstrip"><Svg w={11} crisp><path fill="currentColor" stroke="none" d="M0 0H11V7H0ZM0 8H3V11H0ZM4 8H7V11H4ZM8 8H11V11H8Z" /></Svg></SmallButton>
            <SmallButton aria-label="Show tabs"><Svg w={11} crisp><path fill="#666" stroke="none" d="M0 0H11V11H0Z" /></Svg></SmallButton>
          </StatusCell>
        </StatusRight>
      </StatusBar>

      <Taskbar>
        <Weather>
          <svg width="24" height="22" viewBox="0 0 24 22" aria-hidden="true">
            <defs><linearGradient id="sun" x1="0" y1="0" x2="0" y2="1"><stop stopColor="#ffc31f" /><stop offset="1" stopColor="#f06a10" /></linearGradient></defs>
            <circle cx="12" cy="11" r="10.5" fill="url(#sun)" />
            <path stroke="#f6e3ba" strokeWidth="2" strokeLinecap="round" d="M4 5H15M18 5H23M7 9H19M1 13.5H10M14 13.5H18M1 17.5H12M15 17.5H20" />
          </svg>
          <div><span>90°F</span><span>Haze</span></div>
        </Weather>
        <Dock>
          <DockButton aria-label="Start"><WinLogo /></DockButton>
          <SearchButton>
            <Svg w={14} sw={1.8}><circle cx="8.5" cy="5.5" r="4.5" /><path d="M5.3 8.7L.8 13.2" /></Svg>Search
          </SearchButton>
          {dock.map((d) => (
            <DockButton key={d.name} aria-label={d.name} $on={d.on}>{d.art}{d.running && <Indicator $on={d.on} />}</DockButton>
          ))}
        </Dock>
        <Tray>
          <TrayButton aria-label="Hidden icons"><Svg w={12} h={8} sw={1.3}><path d="M.5 7L6 1L11.5 7" /></Svg></TrayButton>
          <TrayButton aria-label="Cloud"><Svg w={16}><rect width="16" height="16" rx="2" fill="#fff" stroke="none" /><path stroke="#3b82f0" strokeWidth="1.5" d="M9 12.3H4.5A2.6 2.6 0 0 1 4 7.2A4 4 0 0 1 11.8 6.5A3 3 0 0 1 11.5 12.3L8 9.3" /></Svg></TrayButton>
          <TrayButton aria-label="Update"><Svg w={18} h={17} sw={1.3}><path d="M2 7A6.5 6.5 0 0 1 14.5 5M15.5 1V5.5H11M1.5 15.5V11H6M2.5 12.5Q4 15 7 15.2" /><circle cx="13" cy="12.5" r="4" fill="#1a7fe0" stroke="none" /></Svg></TrayButton>
          <TrayText><span>ENG</span><span>IN</span></TrayText>
          <TrayButton aria-label="Network"><Svg w={16} h={13} sw={1.3}><path d="M.8 5A10.5 10.5 0 0 1 15.2 5M3 7.5A7.5 7.5 0 0 1 13 7.5M5.2 9.8A4.3 4.3 0 0 1 10.8 9.8" /><circle cx="8" cy="11.4" r="1.5" fill="currentColor" stroke="none" /></Svg></TrayButton>
          <TrayButton aria-label="Volume"><Svg w={16} h={13} sw={1.2}><path d="M.6 4.5H3.2L7 1V12L3.2 8.5H.6ZM9 4.5Q10.5 6.5 9 8.5M11 2.8Q13.5 6.5 11 10.2M13 1Q16.8 6.5 13 12" /></Svg></TrayButton>
          <TrayButton aria-label="Battery"><Svg w={16} h={12} sw={1.2}><path d="M7.5 2.5H13.5V10.5H4.5V8M14 5H15.5V8H14M2 0V2.5M5 0V2.5M3.5 6V10.5" /><path fill="currentColor" stroke="none" d="M.5 2.5H6.5V4.5Q6.5 6.5 3.5 6.5Q.5 6.5 .5 4.5Z" /></Svg></TrayButton>
          <TrayText $end><span>14:30</span><span>09-02-2023</span></TrayText>
          <Badge>3</Badge>
        </Tray>
      </Taskbar>
    </Window>
  );
}
